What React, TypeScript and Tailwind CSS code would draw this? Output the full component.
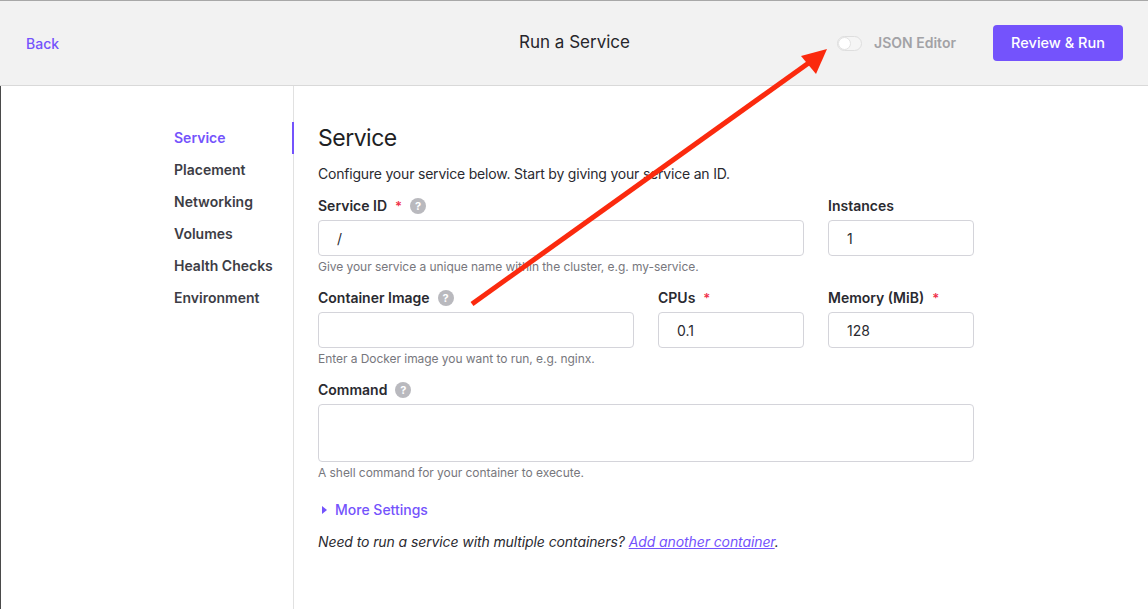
import React from "react";

const purple = "text-[#7453fc]";

function HelpIcon() {
  return (
    <span className="ml-2 inline-flex h-4 w-4 items-center justify-center rounded-full bg-[#b9b9be] text-[11px] font-bold leading-none text-white">
      ?
    </span>
  );
}

function Label({
  text,
  required = false,
  help = false,
}: {
  text: string;
  required?: boolean;
  help?: boolean;
}) {
  return (
    <div className="flex h-5 items-center text-sm font-semibold text-[#2a2a30]">
      <span>{text}</span>
      {required ? <span className="ml-2 text-[13px] text-[#f0324b]">*</span> : null}
      {help ? <HelpIcon /> : null}
    </div>
  );
}

function Input({ value = "" }: { value?: string }) {
  return (
    <div className="mt-1 flex h-9 items-center rounded border border-[#d4d4da] bg-white pl-[18px] pr-4 pt-px text-sm text-[#2a2a30]">
      {value}
    </div>
  );
}

function Help({ text }: { text?: string }) {
  return (
    <div className="mt-[3px] h-4 text-xs leading-4 tracking-[-0.05px] text-[#77777d]">{text}</div>
  );
}

const navItems = [
  "Service",
  "Placement",
  "Networking",
  "Volumes",
  "Health Checks",
  "Environment",
];

function Arrow() {
  return (
    <svg
      className="pointer-events-none absolute left-0 top-0"
      width="1148"
      height="609"
      viewBox="0 0 1148 609"
    >
      <line
        x1="472"
        y1="304"
        x2="810"
        y2="62"
        stroke="#fb2a0e"
        strokeWidth="5"
        strokeLinecap="butt"
      />
      <polygon points="827,49 801,56 816,74" fill="#fb2a0e" />
    </svg>
  );
}

export default function App() {
  return (
    <div
      className="relative h-[609px] w-[1148px] overflow-hidden bg-white"
      style={{ fontFamily: "Inter, 'Noto Sans', sans-serif" }}
    >
      <header className="flex h-[86px] items-center border-b border-t border-b-[#d9d9d9] border-t-[#a8a8a8] bg-[#f2f2f2] pl-[26px] pr-[25px]">
        <div className="flex-1">
          <span className={`text-sm font-medium ${purple}`}>Back</span>
        </div>
        <div className="text-[17px] text-[#26262b]">Run a Service</div>
        <div className="flex flex-1 items-center justify-end">
          <span className="relative h-[15px] w-[25px] rounded-full border border-[#dedede] bg-[#f5f5f5]">
            <span className="absolute left-0 top-0 h-[13px] w-[13px] rounded-full border border-[#e2e2e2] bg-white" />
          </span>
          <span className="ml-3 text-sm font-semibold text-[#a2a2a6]">JSON Editor</span>
          <button className="ml-[37px] h-9 w-[130px] rounded bg-[#7453fc] text-[14.5px] font-medium text-white">
            Review &amp; Run
          </button>
        </div>
      </header>

      <div className="flex h-[523px] shadow-[inset_1px_0_0_#4a4a4a]">
        <aside className="w-[294px] shrink-0 border-r border-[#e1e1e1] pl-[174px] pt-9">
          <nav className="flex flex-col">
            {navItems.map((item, i) => (
              <div
                key={item}
                className={`-mr-px flex h-8 items-center border-r-2 text-sm font-semibold ${
                  i === 0
                    ? "border-[#7453fc] text-[#7453fc]"
                    : "border-transparent text-[#3d3d45]"
                }`}
              >
                {item}
              </div>
            ))}
          </nav>
        </aside>

        <main className="w-[680px] pl-6 pt-9">
          <h1 className="h-8 text-[23px] leading-8 tracking-[-0.5px] text-[#1f1f24]">Service</h1>
          <p className="mt-[10px] text-sm leading-5 tracking-[-0.2px] text-[#2a2a30]">
            Configure your service below. Start by giving your service an ID.
          </p>

          <div className="mt-3 grid w-[656px] grid-cols-4 gap-x-6">
            <div className="col-span-3">
              <Label text="Service ID" required help />
              <Input value="/" />
              <Help text="Give your service a unique name within the cluster, e.g. my-service." />
            </div>
            <div>
              <Label text="Instances" />
              <Input value="1" />
              <Help />
            </div>
          </div>

          <div className="mt-[13px] grid w-[656px] grid-cols-4 gap-x-6">
            <div className="col-span-2">
              <Label text="Container Image" help />
              <Input />
              <Help text="Enter a Docker image you want to run, e.g. nginx." />
            </div>
            <div>
              <Label text="CPUs" required />
              <Input value="0.1" />
              <Help />
            </div>
            <div>
              <Label text="Memory (MiB)" required />
              <Input value="128" />
              <Help />
            </div>
          </div>

          <div className="mt-[13px] w-[656px]">
            <Label text="Command" help />
            <div className="mt-1 h-[58px] rounded border border-[#d4d4da] bg-white" />
            <Help text="A shell command for your container to execute." />
          </div>

          <div className={`mt-[19px] flex h-5 items-center text-sm font-medium ${purple}`}>
            <span className="ml-[4px] mr-[8px] inline-block h-0 w-0 border-y-[4px] border-l-[5px] border-y-transparent border-l-[#7453fc]" />
            More Settings
          </div>

          <p className="mt-3 text-sm italic leading-5 tracking-[-0.1px] text-[#2a2a30]">
            Need to run a service with multiple containers?{" "}
            <span className="text-[#7453fc] underline">Add another container</span>.
          </p>
        </main>
      </div>

      <Arrow />
    </div>
  );
}
